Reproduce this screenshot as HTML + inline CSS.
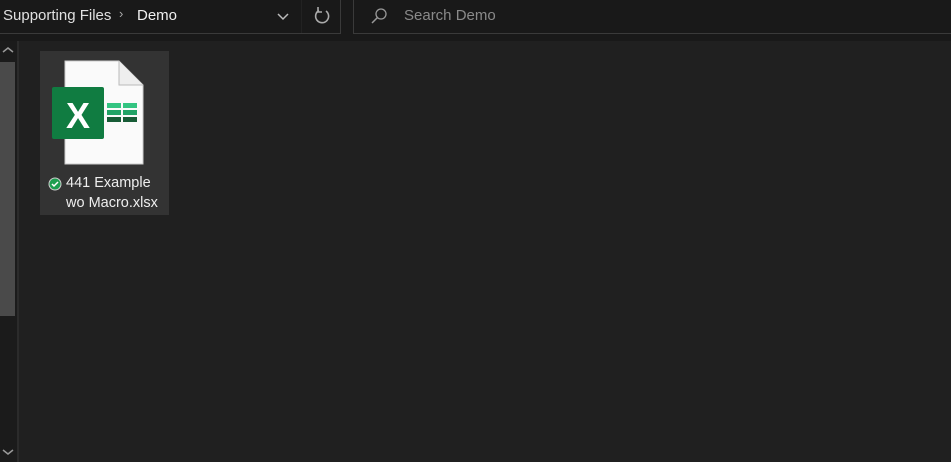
<!DOCTYPE html>
<html><head><style>
body{margin:0;width:951px;height:462px;background:#202020;overflow:hidden;font-family:"Liberation Sans",sans-serif;position:relative}
.top{position:absolute;left:0;top:0;width:951px;height:41px;background:#191919}
.addr{position:absolute;left:-2px;top:-2px;width:341px;height:35px;border:1px solid #3a3a3a;border-top:none}
.search{position:absolute;left:353px;top:-2px;width:610px;height:35px;border:1px solid #3a3a3a;border-top:none}
.t{position:absolute;font-size:15px}
.lcol{position:absolute;left:0;top:41px;width:17px;height:421px;background:#1b1b1b}
.thumb{position:absolute;left:0;top:62px;width:15px;height:254px;background:#4a4a4a}
.div{position:absolute;left:17px;top:41px;width:2px;height:421px;background:#2b2b2b}
.tile{position:absolute;left:40px;top:51px;width:129px;height:164px;background:#333}
</style></head><body>
<div class="top"></div>
<div class="addr"></div>
<div style="position:absolute;left:301px;top:0;width:1px;height:33px;background:#222"></div>
<div class="t" style="left:3px;top:7px;color:#e0e0e0">Supporting Files</div>
<div class="t" style="left:119px;top:6px;color:#aaa;font-size:13px">›</div>
<div class="t" style="left:137px;top:7px;color:#f0f0f0">Demo</div>
<svg style="position:absolute;left:277px;top:11px" width="12" height="10"><path d="M1 3l5 5 5-5" stroke="#bbb" stroke-width="1.5" fill="none"/></svg>
<svg style="position:absolute;left:313px;top:6px" width="18" height="20"><path d="M13 5A6.5 6.5 0 1 1 6 4.5" stroke="#aaa" stroke-width="1.6" fill="none"/><path d="M5 1v5h4" stroke="#aaa" stroke-width="1.6" fill="none"/></svg>
<div class="search"></div>
<svg style="position:absolute;left:370px;top:7px" width="18" height="18"><circle cx="11" cy="7" r="5" stroke="#999" stroke-width="1.3" fill="none"/><path d="M7.5 10.5L2 16" stroke="#999" stroke-width="1.5"/></svg>
<div class="t" style="left:404px;top:7px;color:#8a8a8a">Search Demo</div>
<div class="lcol"></div>
<div class="thumb"></div>
<svg style="position:absolute;left:2px;top:46px" width="12" height="8"><path d="M1 6l5-4 5 4" stroke="#999" stroke-width="1.5" fill="none"/></svg>
<svg style="position:absolute;left:2px;top:448px" width="12" height="8"><path d="M1 2l5 4 5-4" stroke="#999" stroke-width="1.5" fill="none"/></svg>
<div class="div"></div>
<div class="tile"></div>
<svg style="position:absolute;left:50px;top:60px" width="95" height="106">
<path d="M15 1H69L93 25V104H15Z" fill="#fafafa" stroke="#ccc"/>
<path d="M69 1V25H93" fill="#eee" stroke="#bbb"/>
<rect x="2" y="27" width="52" height="52" rx="2" fill="#107c41"/>
<text x="28" y="68" text-anchor="middle" font-family="Liberation Sans" font-weight="bold" font-size="36" fill="#fff">X</text>
<rect x="57" y="43" width="14" height="5" fill="#33c481"/><rect x="73" y="43" width="14" height="5" fill="#33c481"/>
<rect x="57" y="50" width="14" height="5" fill="#21a366"/><rect x="73" y="50" width="14" height="5" fill="#21a366"/>
<rect x="57" y="57" width="14" height="5" fill="#185c37"/><rect x="73" y="57" width="14" height="5" fill="#185c37"/>
</svg>
<svg style="position:absolute;left:48px;top:177px" width="14" height="14"><circle cx="7" cy="7" r="6.5" fill="#cfcfcf"/><circle cx="7" cy="7" r="5.5" fill="#1d9e4f"/><path d="M4 7l2 2 4-4" stroke="#fff" stroke-width="1.5" fill="none"/></svg>
<div class="t" style="left:66px;top:175px;color:#eee;font-size:14.5px">441 Example</div>
<div class="t" style="left:66px;top:195px;color:#eee;font-size:14.5px">wo Macro.xlsx</div>
</body></html>
